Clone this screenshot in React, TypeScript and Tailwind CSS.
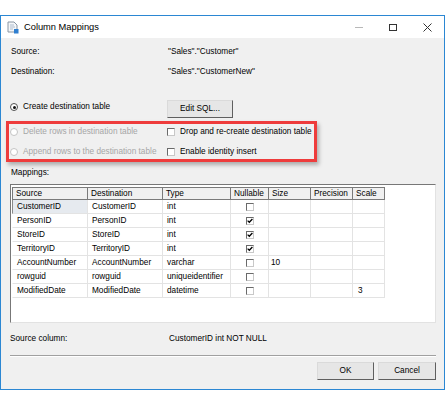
import React from "react";

type Row = {
  source: string;
  dest: string;
  type: string;
  nullable: boolean;
  size?: string;
  precision?: string;
  scale?: string;
};

const ROWS: Row[] = [
  { source: "CustomerID", dest: "CustomerID", type: "int", nullable: false },
  { source: "PersonID", dest: "PersonID", type: "int", nullable: true },
  { source: "StoreID", dest: "StoreID", type: "int", nullable: true },
  { source: "TerritoryID", dest: "TerritoryID", type: "int", nullable: true },
  { source: "AccountNumber", dest: "AccountNumber", type: "varchar", nullable: false, size: "10" },
  { source: "rowguid", dest: "rowguid", type: "uniqueidentifier", nullable: false },
  { source: "ModifiedDate", dest: "ModifiedDate", type: "datetime", nullable: false, scale: "3" },
];

const HEADERS = [
  { label: "Source", w: "w-[76px]" },
  { label: "Destination", w: "w-[75px]" },
  { label: "Type", w: "w-[68px]" },
  { label: "Nullable", w: "w-[38px]" },
  { label: "Size", w: "w-[42px]" },
  { label: "Precision", w: "w-[42px]" },
  { label: "Scale", w: "w-[32px]" },
];

function Radio({ checked, disabled }: { checked?: boolean; disabled?: boolean }) {
  return (
    <div
      className={`w-[8px] h-[8px] rounded-full border bg-white flex items-center justify-center shrink-0 ${
        disabled ? "border-[#c4c4c4]" : "border-[#505050]"
      }`}
    >
      {checked && <div className="w-[3px] h-[3px] rounded-full bg-[#111]" />}
    </div>
  );
}

function Check({ checked }: { checked?: boolean }) {
  return (
    <div className="w-[8px] h-[8px] border border-[#6a6a6a] border-r-[#c8c8c8] border-b-[#c8c8c8] bg-white shrink-0 flex items-center justify-center">
      {checked && (
        <svg width="6" height="6" viewBox="0 0 6 6">
          <path d="M0.6 2.6L2.3 4.3L5.4 1" stroke="#000" strokeWidth="1.3" fill="none" />
        </svg>
      )}
    </div>
  );
}

function WinButton({ label, w }: { label: string; w: string }) {
  return (
    <button
      className={`${w} h-[18px] bg-[#e6e6e6] border border-[#dadada] border-r-[#5f5f5f] border-b-[#5f5f5f] flex items-center justify-center text-black`}
    >
      {label}
    </button>
  );
}

export default function App() {
  return (
    <div className="w-[446px] h-[405px] bg-white font-['Liberation_Sans',Arial,sans-serif] text-[8.25px] leading-[12px] text-black">
      <div className="mt-[15px] w-[445px] h-[375px] border border-[#2b87d3] flex flex-col">
        {/* Title bar */}
        <div className="h-[22px] bg-white flex items-center shrink-0">
          <svg width="12" height="13" viewBox="0 0 12 13" className="ml-[6px]">
            <path d="M1 1H7L10 4V11H1Z" fill="#f4f6f8" stroke="#8a96a4" strokeWidth="1" />
            <path d="M3 4H7M3 6H8M3 8H6" stroke="#9fb0c4" strokeWidth="0.8" />
            <rect x="7" y="8" width="4.5" height="4.5" fill="#2f7fd0" />
          </svg>
          <span className="ml-[5px] text-[9.3px]">Column Mappings</span>
          <div className="ml-auto flex items-center h-full">
            <div className="w-[34px] flex justify-center">
              <div className="w-[8px] h-px bg-[#b8b8b8]" />
            </div>
            <div className="w-[34px] flex justify-center">
              <div className="w-[8px] h-[7px] border border-[#333]" />
            </div>
            <div className="w-[34px] flex justify-center">
              <svg width="9" height="9" viewBox="0 0 9 9">
                <path d="M0.5 0.5L8.5 8.5M8.5 0.5L0.5 8.5" stroke="#333" strokeWidth="1" />
              </svg>
            </div>
          </div>
        </div>

        {/* Body */}
        <div className="flex-1 bg-[#f0f0f0] flex flex-col">
          <div className="mt-[8px] h-[12px] flex">
            <span className="w-[167px] pl-[10px]">Source:</span>
            <span>"Sales"."Customer"</span>
          </div>
          <div className="mt-[8px] h-[12px] flex">
            <span className="w-[167px] pl-[10px]">Destination:</span>
            <span>"Sales"."CustomerNew"</span>
          </div>

          <div className="mt-[22px] h-[17px] flex">
            <div className="w-[166px] pl-[9px] mt-[1px] h-[12px] flex items-center gap-[5px]">
              <Radio checked />
              <span>Create destination table</span>
            </div>
            <WinButton label="Edit SQL..." w="w-[66px]" />
          </div>

          <div className="mt-[4px] ml-[5px] w-[311px] h-[41px] border-[3px] border-[#ee3c3c] shadow-[2px_3px_4px_rgba(0,0,0,0.28)] pt-[2px] flex flex-col">
            <div className="h-[12px] flex items-center">
              <div className="w-[158px] pl-[1px] flex items-center gap-[5px] text-[#a6a6a6]">
                <Radio disabled />
                <span>Delete rows in destination table</span>
              </div>
              <div className="flex items-center gap-[5px]">
                <Check />
                <span>Drop and re-create destination table</span>
              </div>
            </div>
            <div className="mt-[8px] h-[12px] flex items-center">
              <div className="w-[158px] pl-[1px] flex items-center gap-[5px] text-[#a6a6a6]">
                <Radio disabled />
                <span className="whitespace-nowrap">Append rows to the destination table</span>
              </div>
              <div className="flex items-center gap-[5px]">
                <Check />
                <span>Enable identity insert</span>
              </div>
            </div>
          </div>

          <div className="mt-[5px] h-[12px] pl-[10px]">Mappings:</div>

          {/* Grid */}
          <div className="mt-[5px] ml-[9px] w-[426px] h-[139px] bg-white border border-[#777] border-r-[#e2e2e2] border-b-[#e2e2e2] pl-[1px] pt-[2px] flex flex-col">
            <div className="flex h-[13px]">
              {HEADERS.map((h, i) => (
                <div
                  key={h.label}
                  className={`${h.w} h-full bg-[#f0f0f0] border-t border-b border-r border-[#7a7a7a] px-[3px] flex items-center ${
                    i === 0 ? "border-l" : ""
                  }`}
                >
                  {h.label}
                </div>
              ))}
            </div>
            {ROWS.map((r, ri) => (
              <div key={r.source} className="flex h-[14px]">
                <div
                  className={`w-[76px] h-full px-[4px] flex items-center border-r border-b border-[#e3e3e3] ${
                    ri === 0 ? "bg-[#e6eaef] border-l border-l-[#8a8a8a]" : "border-l border-l-white"
                  }`}
                >
                  {r.source}
                </div>
                <div className="w-[75px] h-full px-[4px] flex items-center border-r border-b border-[#e3e3e3]">
                  {r.dest}
                </div>
                <div className="w-[68px] h-full px-[4px] flex items-center border-r border-b border-[#e3e3e3]">
                  {r.type}
                </div>
                <div className="w-[38px] h-full flex items-center justify-center border-r border-b border-[#e3e3e3]">
                  <Check checked={r.nullable} />
                </div>
                <div className="w-[42px] h-full px-[2px] flex items-center border-r border-b border-[#e3e3e3]">
                  {r.size ?? ""}
                </div>
                <div className="w-[42px] h-full px-[3px] flex items-center border-r border-b border-[#e3e3e3]">
                  {r.precision ?? ""}
                </div>
                <div className="w-[32px] h-full px-[5px] flex items-center border-r border-b border-[#e3e3e3]">
                  {r.scale ?? ""}
                </div>
              </div>
            ))}
          </div>

          <div className="mt-[10px] h-[12px] flex">
            <span className="w-[168px] pl-[9px]">Source column:</span>
            <span>CustomerID int NOT NULL</span>
          </div>

          <div className="mt-[10px] ml-[9px] w-[426px] h-[2px] border-t border-[#a0a0a0] border-b border-b-white" />

          <div className="mt-[5px] h-[18px] flex justify-end gap-[4px] pr-[8px]">
            <WinButton label="OK" w="w-[57px]" />
            <WinButton label="Cancel" w="w-[58px]" />
          </div>
        </div>
      </div>
    </div>
  );
}
